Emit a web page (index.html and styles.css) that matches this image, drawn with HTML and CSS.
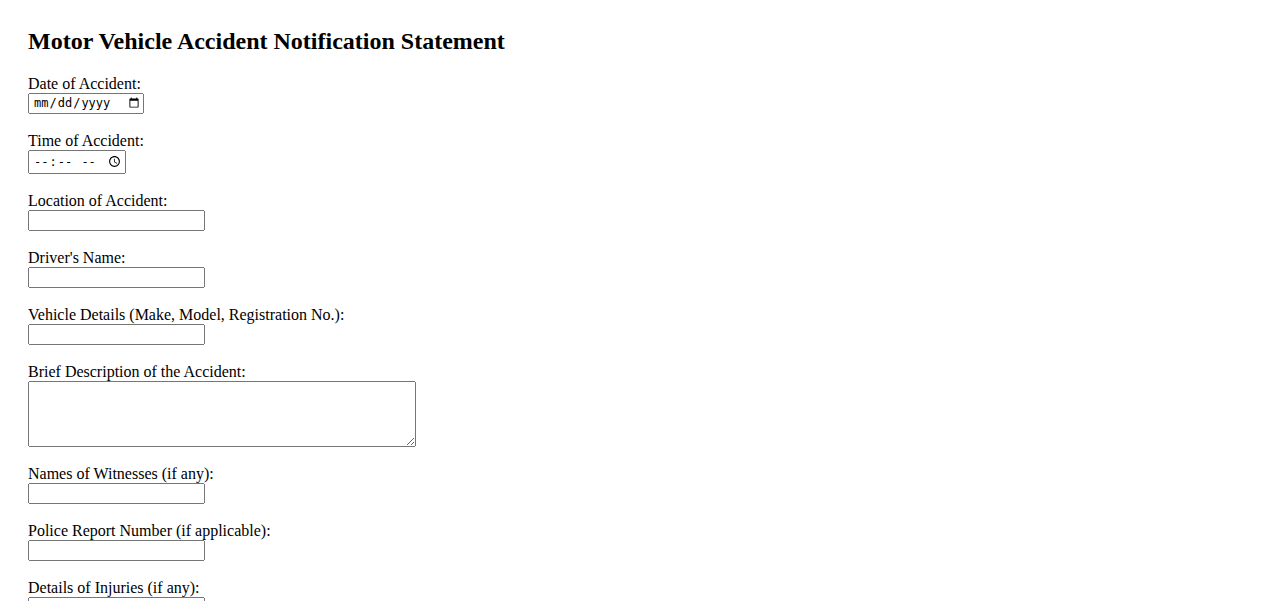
FILE: index.html
```html
<!DOCTYPE html>
<html lang="en">
<head>
<meta charset="utf-8">
<title>Motor Vehicle Accident Notification Statement</title>
<link rel="stylesheet" href="styles.css">
</head>
<body>
<main class="page">
  <h2 class="title">Motor Vehicle Accident Notification Statement</h2>
  <form class="form">
    <div class="field">
      <label class="label" for="date">Date of Accident:</label>
      <input class="ctl ctl-date" type="date" id="date" name="date">
    </div>
    <div class="field">
      <label class="label" for="time">Time of Accident:</label>
      <input class="ctl ctl-time" type="time" id="time" name="time">
    </div>
    <div class="field">
      <label class="label" for="location">Location of Accident:</label>
      <input class="ctl ctl-text" type="text" id="location" name="location">
    </div>
    <div class="field">
      <label class="label" for="driver">Driver's Name:</label>
      <input class="ctl ctl-text" type="text" id="driver" name="driver">
    </div>
    <div class="field">
      <label class="label" for="vehicle">Vehicle Details (Make, Model, Registration No.):</label>
      <input class="ctl ctl-text" type="text" id="vehicle" name="vehicle">
    </div>
    <div class="field">
      <label class="label" for="description">Brief Description of the Accident:</label>
      <textarea class="ctl ctl-area" id="description" name="description"></textarea>
    </div>
    <div class="field">
      <label class="label" for="witnesses">Names of Witnesses (if any):</label>
      <input class="ctl ctl-text" type="text" id="witnesses" name="witnesses">
    </div>
    <div class="field">
      <label class="label" for="police">Police Report Number (if applicable):</label>
      <input class="ctl ctl-text" type="text" id="police" name="police">
    </div>
    <div class="field">
      <label class="label" for="injuries">Details of Injuries (if any):</label>
      <input class="ctl ctl-text" type="text" id="injuries" name="injuries">
    </div>
  </form>
</main>
</body>
</html>
```

FILE: styles.css
```css
html, body {
  margin: 0;
  padding: 0;
  background: #ffffff;
}

.page {
  padding: 28px 28px 28px 28px;
  font-family: "Liberation Serif", "Times New Roman", serif;
  font-size: 16px;
  color: #000000;
}

.title {
  margin: 0 0 19px 0;
  font-size: 24px;
  font-weight: bold;
  line-height: 27.6px;
}

.form {
  display: flex;
  flex-direction: column;
  align-items: flex-start;
  gap: 18px;
}

.field {
  display: flex;
  flex-direction: column;
  align-items: flex-start;
}

.label {
  display: block;
  line-height: 18px;
}

.ctl {
  box-sizing: border-box;
  margin: 0;
}

.ctl-date {
  width: 116px;
  height: 21px;
  font-size: 12px;
  padding-left: 3px;
}

.ctl-time {
  width: 98px;
  height: 24px;
  font-size: 12px;
  padding-left: 3px;
}

.ctl-text {
  width: 177px;
  height: 21px;
}

.ctl-area {
  width: 388px;
  height: 66px;
  resize: both;
}
```
